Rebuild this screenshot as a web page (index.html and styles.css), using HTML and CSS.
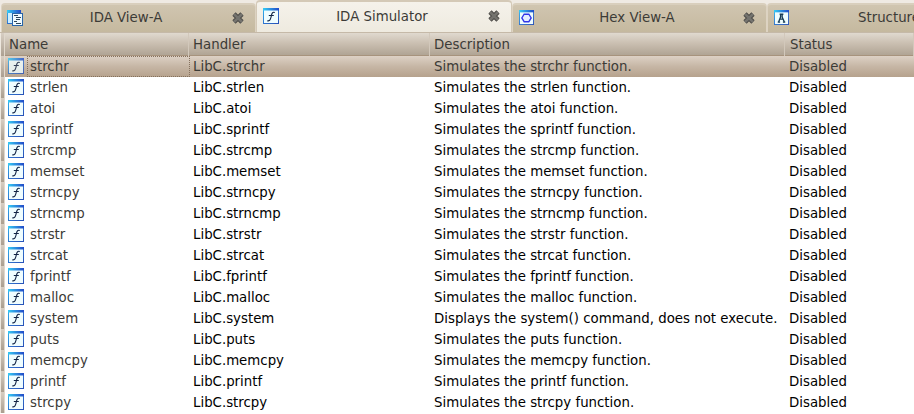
FILE: index.html
```html
<!DOCTYPE html>
<html lang="en">
<head>
<meta charset="utf-8">
<title>IDA Simulator</title>
<link rel="stylesheet" href="styles.css">
</head>
<body>
<svg class="defs" width="0" height="0" aria-hidden="true">
  <defs>
    <linearGradient id="bar" x1="0" x2="1"><stop offset="0" stop-color="#35cdf5"/><stop offset="1" stop-color="#2149c8"/></linearGradient>
    <linearGradient id="edge" x1="0" x2="1" y1="0" y2="1"><stop offset="0" stop-color="#2fb4ee"/><stop offset=".5" stop-color="#2f75cf"/><stop offset="1" stop-color="#2852b8"/></linearGradient>
    <symbol id="win" viewBox="0 0 16 16">
      <rect x=".5" y=".5" width="15" height="15" fill="#effdff" stroke="url(#edge)"/>
      <rect width="16" height="2.5" fill="url(#bar)"/>
    </symbol>
    <symbol id="fn" viewBox="0 0 16 16">
      <use href="#win"/>
      <path d="M11.8 4.6C9.6 3.6 8.9 5 8.3 8S7 13.6 4.3 12.7M5.8 7.5h5" fill="none" stroke="#102344" stroke-width="1.15"/>
    </symbol>
    <symbol id="close" viewBox="0 0 14 14">
      <path d="M3 3l8 8M11 3l-8 8" stroke="#4b4a46" stroke-width="4.6"/>
      <path d="M3 3l8 8M11 3l-8 8" stroke="#74736e" stroke-width="2.6"/>
    </symbol>
  </defs>
</svg>
<div class="tabs">
  <div class="tab">
    <svg class="icon views" viewBox="0 0 16 16"><rect x=".5" y=".5" width="13" height="13" fill="#cceeff" stroke="url(#edge)"/><rect width="14" height="3" fill="url(#bar)"/><rect x="5.5" y="3.5" width="10" height="12" fill="#effaff" stroke="#2865a8"/><path d="M7 5.5h4M9 7.5h5M9 9.5h4M7 11.5h3M9 13.5h5" stroke="#2c465c"/></svg>
    <span class="title">IDA View-A</span><svg class="close"><use href="#close"/></svg>
  </div>
  <div class="tab active">
    <svg class="icon"><use href="#fn"/></svg>
    <span class="title">IDA Simulator</span><svg class="close"><use href="#close"/></svg>
  </div>
  <div class="tab">
    <svg class="icon hex" viewBox="0 0 16 16"><use href="#win"/><path d="M5.5 4.5h5L13 8.5l-2.5 4h-5L3 8.5z" fill="#e5edff" stroke="#3034e8" stroke-width="1.4"/></svg>
    <span class="title">Hex View-A</span><svg class="close"><use href="#close"/></svg>
  </div>
  <div class="tab last">
    <svg class="icon hex" viewBox="0 0 16 16"><use href="#win"/><path d="M6 4.5h4M7 4.5v3L4.8 13M8.7 4.5v3L11.2 13M6 9.8h4M4 12.9h2.5M9.5 12.9H12" fill="none" stroke="#173b55" stroke-width="1.4"/></svg>
    <span class="title">Structures</span>
  </div>
</div>
<div class="grid head"><i class="gutter"></i><span>Name</span><span>Handler</span><span>Description</span><span class="status">Status</span></div>
<div class="rows">
<div class="grid row selected"><i class="gutter"></i><svg class="icon"><use href="#fn"/></svg><span class="name">strchr</span><span>LibC.strchr</span><span>Simulates the strchr function.</span><span>Disabled</span></div>
<div class="grid row"><i class="gutter"></i><svg class="icon"><use href="#fn"/></svg><span class="name">strlen</span><span>LibC.strlen</span><span>Simulates the strlen function.</span><span>Disabled</span></div>
<div class="grid row"><i class="gutter"></i><svg class="icon"><use href="#fn"/></svg><span class="name">atoi</span><span>LibC.atoi</span><span>Simulates the atoi function.</span><span>Disabled</span></div>
<div class="grid row"><i class="gutter"></i><svg class="icon"><use href="#fn"/></svg><span class="name">sprintf</span><span>LibC.sprintf</span><span>Simulates the sprintf function.</span><span>Disabled</span></div>
<div class="grid row"><i class="gutter"></i><svg class="icon"><use href="#fn"/></svg><span class="name">strcmp</span><span>LibC.strcmp</span><span>Simulates the strcmp function.</span><span>Disabled</span></div>
<div class="grid row"><i class="gutter"></i><svg class="icon"><use href="#fn"/></svg><span class="name">memset</span><span>LibC.memset</span><span>Simulates the memset function.</span><span>Disabled</span></div>
<div class="grid row"><i class="gutter"></i><svg class="icon"><use href="#fn"/></svg><span class="name">strncpy</span><span>LibC.strncpy</span><span>Simulates the strncpy function.</span><span>Disabled</span></div>
<div class="grid row"><i class="gutter"></i><svg class="icon"><use href="#fn"/></svg><span class="name">strncmp</span><span>LibC.strncmp</span><span>Simulates the strncmp function.</span><span>Disabled</span></div>
<div class="grid row"><i class="gutter"></i><svg class="icon"><use href="#fn"/></svg><span class="name">strstr</span><span>LibC.strstr</span><span>Simulates the strstr function.</span><span>Disabled</span></div>
<div class="grid row"><i class="gutter"></i><svg class="icon"><use href="#fn"/></svg><span class="name">strcat</span><span>LibC.strcat</span><span>Simulates the strcat function.</span><span>Disabled</span></div>
<div class="grid row"><i class="gutter"></i><svg class="icon"><use href="#fn"/></svg><span class="name">fprintf</span><span>LibC.fprintf</span><span>Simulates the fprintf function.</span><span>Disabled</span></div>
<div class="grid row"><i class="gutter"></i><svg class="icon"><use href="#fn"/></svg><span class="name">malloc</span><span>LibC.malloc</span><span>Simulates the malloc function.</span><span>Disabled</span></div>
<div class="grid row"><i class="gutter"></i><svg class="icon"><use href="#fn"/></svg><span class="name">system</span><span>LibC.system</span><span>Displays the system() command, does not execute.</span><span>Disabled</span></div>
<div class="grid row"><i class="gutter"></i><svg class="icon"><use href="#fn"/></svg><span class="name">puts</span><span>LibC.puts</span><span>Simulates the puts function.</span><span>Disabled</span></div>
<div class="grid row"><i class="gutter"></i><svg class="icon"><use href="#fn"/></svg><span class="name">memcpy</span><span>LibC.memcpy</span><span>Simulates the memcpy function.</span><span>Disabled</span></div>
<div class="grid row"><i class="gutter"></i><svg class="icon"><use href="#fn"/></svg><span class="name">printf</span><span>LibC.printf</span><span>Simulates the printf function.</span><span>Disabled</span></div>
<div class="grid row"><i class="gutter"></i><svg class="icon"><use href="#fn"/></svg><span class="name">strcpy</span><span>LibC.strcpy</span><span>Simulates the strcpy function.</span><span>Disabled</span></div>
</div>
</body>
</html>
```
FILE: styles.css
```css
* { box-sizing: border-box; }
body {
  margin: 0;
  width: 914px;
  height: 414px;
  overflow: hidden;
  background: #fff;
  color: #000;
  font: 13.33px/21px "DejaVu Sans", sans-serif;
  white-space: nowrap;
}
svg { display: block; }
.defs { position: absolute; }
.icon { width: 16px; height: 16px; flex: none; }
.close { width: 14px; height: 14px; margin-right: 10px; flex: none; }

.tabs {
  display: flex;
  align-items: flex-end;
  height: 33px;
  padding-left: 1px;
  overflow: hidden;
  background: #efeae3;
  border-bottom: 1px solid #c5b9a8;
  color: #3c3b37;
}
.tab {
  display: flex;
  align-items: center;
  flex: none;
  width: 255px;
  height: 29px;
  padding: 0 0 2px 5px;
  background: linear-gradient(#d0c5b0, #c5b99f);
  border: 1px solid #ddd3c2;
  border-top: 2px solid #d9cfbd;
  border-bottom: 0;
  border-radius: 4px 4px 0 0;
}
.tab.active {
  width: 256px;
  height: 33px;
  margin-bottom: -1px;
  padding: 0 0 3px 6px;
  background: linear-gradient(#f5f2eb, #eeeadf);
  border: 1px solid #d4c9b7;
  border-top-width: 2px;
  border-bottom: 0;
}
.tab.last { width: 147px; border-right: 0; border-radius: 4px 0 0 0; }
.tab.last .title { flex: none; margin-left: 69px; padding: 0; }
.tab .title { flex: 1; text-align: center; padding-right: 2px; }
.tab .hex { width: 15px; height: 15px; margin-left: 1px; }

.grid {
  display: grid;
  grid-template-columns: 5px 184px 241px 355px 129px;
}
.head {
  height: 23px;
  line-height: 23px;
  color: #3c3b37;
  background: linear-gradient(#e0d9cf, #cbc0b2 45%, #b0a494);
  border-bottom: 1px solid #a7937d;
}
.head span { padding-left: 4px; border-right: 1px solid #d2c8bb; margin-bottom: 1px; }
.head .status { padding-left: 5px; }
.gutter {
  background: linear-gradient(#d7cec3, #aa9e8f);
  border-left: 1px solid #eee8df;
  border-right: 1px solid #e0d8cc;
}
.row {
  grid-template-columns: 5px 22px 163px 241px 355px 128px;
  height: 21px;
}
.row .icon { margin: 2px 0 0 3px; }
.row span { padding-left: 3px; }
.row .name { color: #3c3b37; }
.selected {
  color: #3c3b37;
  background: linear-gradient(#ddd1c5, #c6b6a5 50%, #b6a28d);
}
.selected .icon { opacity: .8; }
.selected .name { outline: 1px dotted #85715d; outline-offset: -1px; }
```
